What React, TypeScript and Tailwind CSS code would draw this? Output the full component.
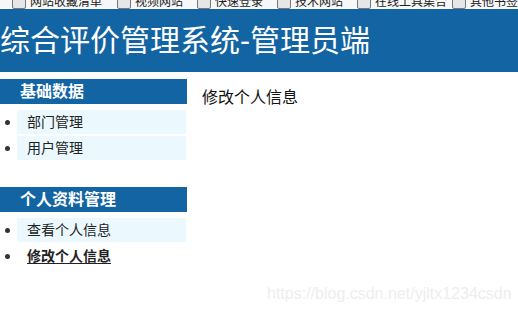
import React from "react";

const font = { fontFamily: '"Liberation Sans", "Noto Sans CJK SC", sans-serif' };

const bookmarks = [
  { x: 12, label: "网站收藏清单" },
  { x: 117, label: "视频网站" },
  { x: 197, label: "快速登录" },
  { x: 277, label: "技术网站" },
  { x: 357, label: "在线工具集合" },
  { x: 452, label: "其他书签" },
];

const groups = [
  { title: "基础数据", items: [{ label: "部门管理" }, { label: "用户管理" }] },
  {
    title: "个人资料管理",
    items: [{ label: "查看个人信息" }, { label: "修改个人信息", active: true }],
  },
];

function Bookmarks() {
  return (
    <div className="h-[9px] overflow-hidden bg-[#f7f7f7]">
      <div className="-mt-[9px] flex h-[18px] items-end">
        {bookmarks.map((b, i) => (
          <div
            key={b.label}
            className="flex items-end gap-[4px]"
            style={{ marginLeft: i === 0 ? b.x : b.x - bookmarks[i - 1].x - 100 }}
          >
            <span className="h-[14px] w-[14px] shrink-0 rounded-[2px] border border-[#777] bg-[#e6e6e6]" />
            <span className="w-[82px] truncate text-[12px] leading-[14px] text-[#222]">{b.label}</span>
          </div>
        ))}
      </div>
    </div>
  );
}

export default function App() {
  return (
    <div className="relative h-[311px] w-[518px] overflow-hidden bg-white" style={font}>
      <Bookmarks />
      <header className="flex h-[63px] items-center bg-[#1264a3]">
        <h1 className="pt-[1px] text-[30px] leading-none font-normal text-white">综合评价管理系统-管理员端</h1>
      </header>

      <div className="flex pt-[7px]">
        <aside className="w-[187px] shrink-0">
          {groups.map((g, gi) => (
            <div key={g.title} className={gi > 0 ? "mt-[27px]" : ""}>
              <div className="flex h-[25px] items-center bg-[#1264a3] pl-[20px] text-[16px] font-bold text-white">
                {g.title}
              </div>
              <ul className="mt-[6px] flex flex-col gap-[2px]">
                {g.items.map((it) => (
                  <li key={it.label} className="flex h-[24px] items-center">
                    <span className="ml-[5px] h-[5px] w-[5px] rounded-full bg-[#333]" />
                    <span
                      className={`ml-[7px] flex h-full w-[169px] items-center pl-[10px] text-[14px] ${
                        it.active ? "font-bold text-[#222] underline underline-offset-2" : "bg-[#ebf9fe] text-[#222]"
                      }`}
                    >
                      {it.label}
                    </span>
                  </li>
                ))}
              </ul>
            </div>
          ))}
        </aside>
        <main className="pl-[15px] pt-[9px]">
          <p className="text-[16px] leading-[20px] text-[#111]">修改个人信息</p>
        </main>
      </div>

      <span className="absolute left-[267px] top-[282px] text-[16px] text-[#eeeeee]">
        https://blog.csdn.net/yjltx1234csdn
      </span>
    </div>
  );
}
